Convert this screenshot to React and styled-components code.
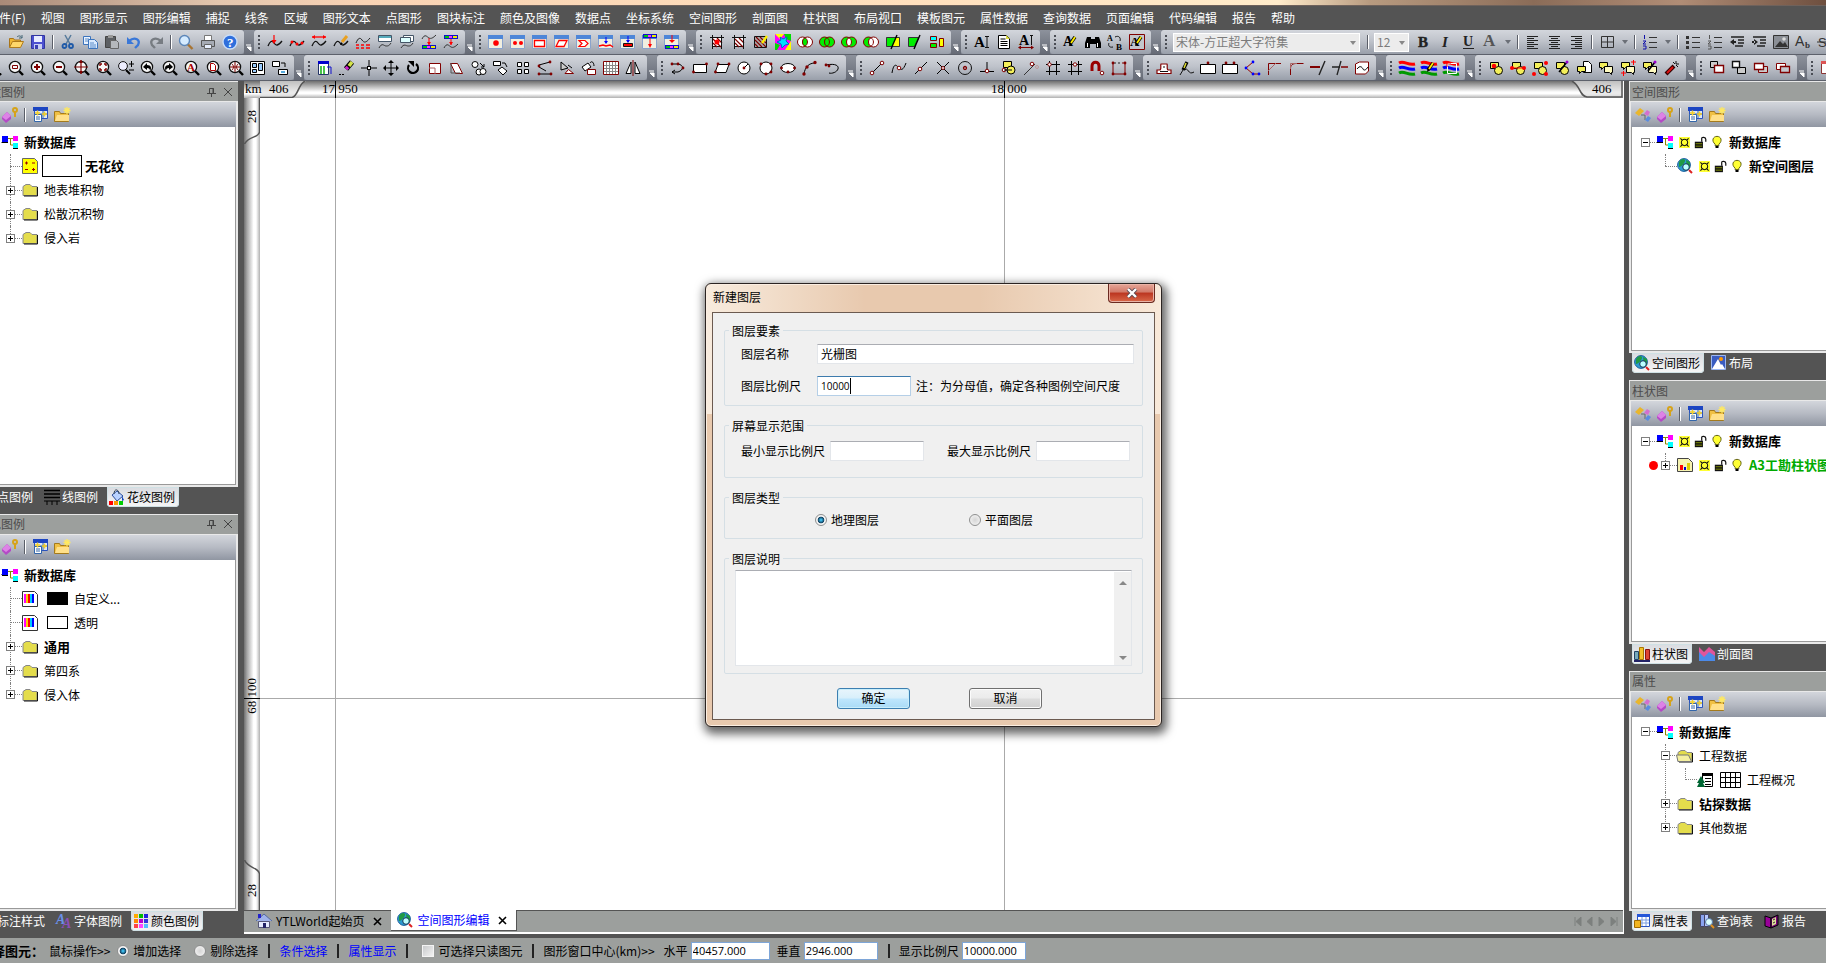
import React from 'react';
import styled, { createGlobalStyle } from 'styled-components';

const GlobalStyle = createGlobalStyle`
    * {
        box-sizing: border-box;
    }
    body {
        margin: 0;
        background: #fff;
        font-family: "Noto Sans CJK SC", "Noto Sans", sans-serif;
        font-size: 12px;
        line-height: 16px;
        color: #000;
    }
    button, input, select, textarea {
        font: inherit;
        color: inherit;
        margin: 0;
    }
    button {
        border: 0;
        background: none;
        padding: 0;
    }
`;

/* ---------- icon drawing helpers ---------- */

const box = (x, y, w, h) => `M${x} ${y}h${w}v${h}h${-w}z`;
const dot = (x, y, r) => `M${x - r} ${y}a${r} ${r} 0 1 0 ${2 * r} 0a${r} ${r} 0 1 0 ${-2 * r} 0z`;
const F = (d, fill = '#000') => <path d={d} fill={fill} />;
const S = (d, stroke = '#000', w = 1) => <path d={d} fill="none" stroke={stroke} strokeWidth={w} />;
const B = (d, fill, stroke = '#000', w = 1) => <path d={d} fill={fill} stroke={stroke} strokeWidth={w} />;
const T = (text, x, y, size, fill = '#000', extra = {}) => (
    <text x={x} y={y} fontSize={size} fill={fill} fontFamily="Liberation Serif, serif" fontWeight="bold" {...extra}>{text}</text>
);

const RED = '#f00';
const DARK = '#800000';
const CREAM = '#f4ef5a';

const lens = (...inner) => [
    S('M11 11l4 4', '#000', 2.4),
    B(dot(7, 7, 5.6), '#f6f6f6', '#111', 1.3),
    ...inner,
];
const wave = [S('M1 12c2-5 4-6 6-3s4 3 8-2', '#111', 1.3)];
const win = [B(box(0.5, 1.5, 14, 13), '#f1efe0', '#8aa3cc'), F(box(0, 1, 15, 4), '#4d86d8')];
const strip = (y) => [F(box(1, y, 14, 4), '#11c'), F(box(2, y + 1, 4, 2), '#0c0'), F(box(6, y + 1, 3, 2), '#f3f'), F(box(10, y + 1, 4, 2), '#ee0')];
const hatch = [B(box(3.5, 3.5, 9, 9), '#fff', '#111'), S('M4 9l4 4M4 5l8 8M8 4l5 5', DARK, 1.2)];
const twoRings = (l, m, r) => [
    B(dot(5.5, 8, 5), l, DARK),
    B(dot(10.5, 8, 5), r, DARK),
    B('M8 3.7a5 5 0 0 1 0 8.6a5 5 0 0 1 0-8.6z', m, DARK),
];
const pts = (list, color = DARK, r = 1.4) => list.map(([x, y]) => F(dot(x, y, r), color));
const shapes = [B(box(2.5, 2.5, 8, 6), CREAM), B(dot(10.5, 10.5, 4), CREAM)];
const rainbow = [
    S('M0 3c5-3 9 3 16 1', '#f00', 3),
    S('M0 8c5-3 9 3 16 1', '#00f', 3),
    S('M0 13c5-3 9 3 16 1', '#090', 3),
];
const notes = [B('M1.5 2.5h8v5h-4l-2 2v-2h-2z', CREAM), B('M6.5 6.5h8v6h-1v2l-2-2h-5z', '#fffbc0')];
const pencil = [S('M7 10l5-7', '#000', 3.4), S('M8 9l4-6', '#fe0', 1.8), F('M6 12l.5-3 2 1.5z')];
const bulletText = [F(box(7, 3, 8, 1), '#333'), F(box(7, 8, 8, 1), '#333'), F(box(7, 13, 8, 1), '#333')];
const aLines = (a, b) => [2, 4, 6, 8, 10, 12, 14].map((y, i) => F(box(i % 2 ? a : 2, y, i % 2 ? b : 11, 1), '#222'));
const tabFolder = [B('M1 4.5l3-2h4l2 2h5v9H1z', '#e4dd4c', '#888'), S('M15.5 5v9H2', '#111', 1)];

const art = {
    newFile: [B('M3.5 1.5h6l3 3v10h-9z', '#fff', '#789')],
    open: [B('M1.5 13.5v-9h4l1 1.5h6v2', '#f0b632', '#a8741a'), B('M1.5 13.5l3-6h11l-3 6z', '#ffd76a', '#b07c1c'), S('M9 3c2-2 4-1 5 1m0-3v3h-3', '#467', 1)],
    save: [B(box(1.5, 1.5, 13, 13), '#4c50d0', '#3035a0'), F(box(4, 2, 8, 6), '#e8ecff'), F(box(4, 10, 8, 5), '#c9cff2'), F(box(5, 11, 3, 4), '#3a3fb0')],
    cut: [S('M5 1l5 9M11 1L6 10', '#567a9c', 1.5), S(dot(4.5, 12, 2), '#1f5aa8', 1.8), S(dot(11, 12, 2), '#1f5aa8', 1.8)],
    copy: [B('M1.5 2.5h7v8h-7z', '#eaf3ff', '#3c74bd'), B('M6.5 5.5h6l3 3v6h-9z', '#d8e9ff', '#3c74bd'), S('M3 5h4M3 7h3M8 9h4M8 11h6M8 13h6', '#5b8cc9')],
    paste: [B(box(1.5, 2.5, 10, 11), '#5c5f63', '#444'), F(box(4, 1, 5, 3), '#999'), B('M6.5 6.5h6l2 2v6h-8z', '#b5b8bc', '#666')],
    undo: [S('M3 7c6-5 12-1 9 4l-3 3', '#3a78d8', 2.4), F('M1 3v7h7z', '#3a78d8')],
    redo: [S('M13 7c-6-5-12-1-9 4l3 3', '#777c82', 2.4), F('M15 3v7H8z', '#777c82')],
    find: [S('M9.5 10l5 5', '#a87431', 2.4), B(dot(6.5, 6.5, 5), '#d5ebff', '#5c86b8', 1.4)],
    print: [B(box(4.5, 1.5, 7, 5), '#fff', '#777'), B('M1.5 6.5h13v6h-13z', '#a6abb4', '#555'), B(box(4.5, 10.5, 7, 4), '#e8f0ff', '#666')],
    help: [B(dot(8, 8, 7), '#2f6fdc', '#c9ddf8', 1.4), T('?', 5, 13, 13, '#fff')],

    wavePoint: [...wave, S('M7 1v6', RED, 1.2), F('M4.5 6h5L7 10z', RED)],
    waveNodes: [...wave, ...pts([[3, 8], [8, 10], [13, 9]], RED, 1.5)],
    waveSpan: [...wave, S('M1 3h14', RED, 1.3), F('M1 3l3-2v4zM15 3l-3-2v4z', RED)],
    waveEdit: [...wave, S('M9 8l5-6', '#e9a020', 3), F('M7 11l1-3 2 2z')],
    waveDash: [S('M1 9c2-5 4-6 6-3s4 3 8-2', '#222'), S('M1 11h3M6 11h3M11 11h4M1 14h3M6 14h3M11 14h4', RED, 1.4)],
    waveWin: [B(box(1.5, 1.5, 13, 6), '#fff', '#456'), F(box(2, 2, 12, 2), '#5ab'), S('M2 14c3-6 5-2 7-2s3 0 5-3', '#333')],
    waveWins: [B(box(4.5, 1.5, 10, 6), '#fff', '#456'), B(box(1.5, 3.5, 10, 5), '#dff', '#456'), S('M2 14c3-5 5-2 7-2s3 0 5-3', '#333')],
    waveDown: [S('M1 5c3-6 5-2 7-1s4 0 7-3', '#333'), S('M8 4v7', RED), F('M6 8h4l-2 3z', RED), ...strip(11)],
    waveUp: [...strip(1), S('M8 5v6', RED), F('M6 8h4l-2 3z', RED), S('M1 14c3-6 5-2 7-1s4 0 7-3', '#333')],

    winDot: [...win, F(dot(8, 9, 2.8), RED)],
    winDots: [...win, F(dot(5, 9, 2), RED), F(dot(11, 9, 2), RED)],
    winRect: [...win, B(box(2.5, 6.5, 10, 6), '#fff', RED, 1.3)],
    winSkew: [...win, B('M5 6.5h8l-3 6h-8z', '#fff', RED, 1.3)],
    winFlag: [...win, B('M3 6.500h6l3 3-3 3H3l3-3z', '#fff', RED, 1.2)],
    winWave: [...win, S('M8 3v6', '#00f'), F('M6 7h4l-2 3z', '#00f'), S('M1 12l4-1 3 1 4-1 3 2', RED, 1.5)],
    winDrop: [...win, S('M8 2v6', '#00f'), F('M6 6h4l-2 3z', '#00f'), B(box(3.5, 9.5, 9, 3), RED, '#111')],
    winStripUp: [...win, ...strip(0), S('M8 4v7', RED), F('M6 10h4l-2 4z', RED)],
    winStripDown: [...win, S('M8 1v7', RED), F('M5 6h6l-3 3z', RED), ...strip(11)],

    hatchDot: [...hatch, S('M1 3.5h14M3.5 1v14M12.5 1v14', '#111'), F(dot(8, 8, 2.5), RED)],
    hatch: [...hatch, S('M1 3.5h14M3.5 1v14M12.5 1v14', '#111')],
    hatchEdit: [B(box(1.5, 2.5, 12, 11), '#aaa', '#111'), S('M2 10l3 3M2 6l7 7M3 3l10 10M7 3l6 6', DARK, 1.2), S('M9 9l5-7', '#fe0', 2.4)],
    colorMap: [F(box(0, 0, 16, 16), '#f0f'), F('M0 0h9L5 5zM10 16l6-9v9z', '#ff0'), F('M9 0h7v7l-5-2zM0 9l5 2-3 5H0z', '#0d0'), B('M5 3l3 2 4-2-1 4 3 3-4 1-3 3-1-4-4-2 4-2z', '#0df', '#06c')],
    ringInter: twoRings('#fff', '#0e0', '#fff'),
    ringAll: twoRings('#0e0', '#0e0', '#0e0'),
    ringMid: twoRings('#0e0', '#fff', '#0e0'),
    ringLeft: twoRings('#0e0', '#fff', '#fff'),
    splitBoth: [B(box(1.5, 3.5, 13, 9), '#0e0', '#333'), F('M11 4h3v8H7z', '#ff0'), S('M12 1L6 15', '#000', 1.4)],
    splitOne: [B('M1.5 3.5h10l-4 9h-6z', '#0e0', '#333'), S('M13 1L7 15', '#000', 1.4)],
    blocks: [B(box(1.5, 2.5, 6, 4), '#0ff', DARK), B(box(1.5, 9.5, 6, 4), '#0e0', DARK), B(box(10.5, 4.5, 4, 8), '#ff0', DARK)],

    textA: [T('A', 0, 13, 15), S('M11 2.5h4M13 3v10M11 13.5h4', '#111')],
    page: [B('M2.5 1.5h8l3 3v10h-11z', '#fff'), S('M4.5 5h5M4.5 7.5h7M4.5 9.5h7M4.5 11.5h7'), F('M10 1l4 4h-4z', '#dd4')],
    textSpan: [T('A', 1, 11, 14), S('M12 1.5h3M13.5 2v9', '#111'), S('M1 13.5h14', DARK), F('M0 13.5l3-2v4zM16 13.5l-3-2v4z', DARK)],
    textEdit: [T('A', 0, 12, 14), ...pencil],
    binoculars: [F('M2 3h4v2h4V3h4l2 6v5h-5v-4H5v4H0V9z'), F(box(2, 9, 1, 4), '#fff'), F(box(12, 9, 1, 4), '#fff')],
    replace: [T('A', 0, 7, 8), T('B', 9, 16, 9), S('M8 3c4-2 6 1 5 4M6 13c-4 1-5-2-4-4', '#111')],
    textBox: [B(box(0.5, 0.5, 15, 15), '#c3c6cc', DARK), T('A', 1, 12, 13), ...pencil],

    lensRect: lens(S(box(4.5, 5.5, 5, 3), DARK)),
    lensPlus: lens(F(box(4, 6, 6, 2), DARK), F(box(6, 4, 2, 6), DARK)),
    lensMinus: lens(F(box(4, 6, 6, 2), DARK)),
    lensPan: lens(S('M0 7h14M7 0v14', DARK, 1.2), F('M5 3h4L7 0zM5 11h4l-2 3z', DARK)),
    lensFull: lens(S('M4 6V4h2M8 4h2v2M10 8v2H8M6 10H4V8', DARK, 1.4)),
    lensStep: [S('M8 10l4 4', '#000', 2), B(dot(5, 6, 4.4), '#eef', '#111'), S('M11 4h5M13.5 1v6M11 10h5')],
    lensBack: lens(F('M3 7l4-4v2c4 0 5 3 3 6 0-2-1-3-3-3v2z')),
    lensNext: lens(F('M11 7L7 3v2c-4 0-5 3-3 6 0-2 1-3 3-3v2z')),
    lensA: lens(T('A', 3, 11, 11, '#a00')),
    lensPage: lens(B('M4.5 3.5h3l2 2v5h-5z', '#fff', '#a00')),
    lensGlobe: lens(S('M2 7h10M7 2v10M4 4c2 2 2 4 0 6M10 4c-2 2-2 4 0 6', DARK)),
    tiles: [B(box(0.5, 1.5, 14, 13), '#fff'), B(box(2.5, 3.5, 4, 4), '#9cf'), B(box(2.5, 9.5, 4, 3), '#9cf'), B(box(8.5, 3.5, 4, 7), '#9cf')],
    tilesMove: [B(box(0.5, 1.5, 7, 5), '#fff'), B(box(6.5, 9.5, 9, 5), '#fff'), S('M9 3h4v4'), F(box(9, 11, 4, 2), '#5ad')],

    tableMove: [B(box(1.5, 1.5, 10, 13), '#fff', '#236'), F(box(1, 1, 11, 3), '#00c'), S('M4 6v8M7 6v8', '#0a0', 1.4), S('M10 7h4v7', '#11c')],
    eraser: [S('M7 9l6-7', '#000', 5.4), S('M10 6l3-4', '#d4e34a', 3.6), S('M7 9l2-2', '#c2c', 3.6), F('M0 14h2v1H0zM3 14h2v1H3z')],
    cross: [S('M8 0v16M0 8h16'), F(box(6, 6, 4, 4)), F(box(7, 7, 2, 2), '#fff')],
    move: [S('M8 2v12M2 8h12'), F('M8 0l3 3H5zM8 16l3-3H5zM0 8l3-3v6zM16 8l-3-3v6z')],
    rotate: [S('M4 5a5 5 0 1 0 7-1', '#000', 2.2), F('M3 1h6v6z')],
    scale: [B(box(2.5, 3.5, 11, 10), '#fff', DARK), S('M2 8h6v6', '#a66')],
    skew: [B('M1.5 3.5h7l5 10h-7z', '#fff', DARK), S('M2 3v10h9', '#555')],
    flipTri: [B('M8 3l6 11H2z', '#fff', DARK)],
    copyRing: [B(dot(4, 4.5, 3), '#fff'), B(dot(8, 12, 3), '#fff'), B(dot(12, 11.5, 3), '#fff'), S('M9 3l4 4m0-3v3h-3')],
    copyBox: [B(box(0.5, 1.5, 7, 4), '#fff'), B('M5 10l4-3 5 4-4 4z', '#fff'), S('M9 3h3l2 4')],
    array: [B(box(2.5, 2.5, 4, 4), '#fff'), B(box(9.5, 2.5, 4, 4), '#fff'), B(box(2.5, 9.5, 4, 4), '#fff'), B(box(9.5, 9.5, 4, 4), '#fff')],
    alignLine: [S('M2 5l11-3M2 7l7 4M2 14h12'), ...pts([[2, 6], [13, 2], [2, 14], [14, 14]])],
    mirrorTri: [B('M2 2l7 6-7 2z', '#ccc'), B('M6 13.5l3.5-4 5 4z', '#fff', DARK), S('M9 5l4 3')],
    rotBox: [B('M1 7l6-4 3 4-6 4z', '#fff'), B(box(6.5, 9.5, 8, 5), '#fff', DARK), S('M9 3c2-3 4 0 4 3')],
    mesh: [B(box(0.5, 1.5, 15, 13), '#fff', DARK), S('M3.5 2v12M6.5 2v12M9.5 2v12M12.5 2v12M1 5.5h14M1 8.5h14M1 11.5h14', '#888')],
    mirror: [B('M6 2v11.5H1z', '#fff'), B('M10 2v11.5h5z', '#fff'), S('M8 0v16', DARK)],

    polyArrow: [S('M2 4h6c6 1 6 6 0 8H2M5 10l-3 2 3 2'), ...pts([[2, 4], [8, 4], [13, 8]])],
    rect: [B(box(1.5, 4.5, 13, 8), '#fff'), ...pts([[1.5, 12], [14.5, 4]])],
    para: [B('M4 4.5h11l-3 8H1z', '#fff'), ...pts([[4, 4], [15, 4], [1.5, 12]])],
    circleR: [B(dot(8, 8, 6), '#fff'), S('M8 8l4-4'), ...pts([[8, 8]])],
    circle3: [B(dot(8, 8, 6), '#fff'), ...pts([[3, 4], [13, 4], [8, 14], [13, 12]])],
    ellipse: [B('M1 8a7 4.5 0 1 0 14 0a7 4.5 0 1 0-14 0z', '#fff'), ...pts([[1.5, 8], [8, 12], [14.5, 8]])],
    arc: [S('M2 14C3 7 7 3 13 3'), ...pts([[2, 14], [5, 7], [13, 2.5]], DARK, 1.7)],
    arcEnd: [S('M2 5c10-2 13 1 12 4s-6 5-9 4'), ...pts([[2, 5], [5, 6]])],

    snapLine: [S('M3 13l9-9'), B(dot(3, 13, 1.8), '#fff', DARK), B(dot(13, 3, 1.8), '#fff', DARK)],
    snapCurve: [S('M1 13C3 1 6 6 8 8s4 3 7-5'), B(dot(8, 8, 1.8), '#fff', DARK)],
    snapMid: [S('M2 14L14 2'), B(dot(7, 9, 1.8), '#fff', DARK)],
    snapX: [S('M2 2l12 12M14 2L2 14'), B(dot(8, 8, 1.5), '#fff', DARK)],
    snapCenter: [S(dot(8, 8, 6.5), '#111'), S(dot(8, 8, 1.5), DARK, 1.3)],
    snapFoot: [S('M8 2v9M1 11.5h14'), B(dot(8, 11, 1.8), '#fff', DARK)],
    snapShape: [B(box(2.5, 1.5, 8, 6), CREAM), B(dot(10, 10, 4), CREAM), B(dot(3, 10, 1.8), '#fff', DARK), S('M3 10h8')],
    snapTan: [S('M1 15L12 4', '#333'), B(dot(9, 4, 1.8), '#fff', DARK), S(dot(14, 7, 1.5), '#b99')],
    gridSnap: [S('M4.5 1v14M11.5 1v14M1 4.5h14M1 11.5h14'), B(dot(4.5, 4.5, 1.7), '#fff', DARK)],
    gridMid: [S('M4.5 1v14M11.5 1v14M1 4.5h14M1 11.5h14'), B(dot(8, 4.5, 1.7), '#fff', DARK)],
    magnet: [S('M3 11V6c0-5 7-5 7 0v5', '#900', 3), B(dot(13, 13, 1.8), '#fff', DARK)],
    polySnap: [B('M2 3h12v11H2z', 'none', DARK), S('M2 3h9', '#c3c6cc', 2), S('M3 3h2M7 3h2', '#222'), ...pts([[2, 3], [14, 3], [14, 14], [2, 14]])],

    stamp: [B('M1 13.5V10h3c2-2 0-4 1-6h6c1 2-1 4 1 6h3v3.5z', '#fff', DARK, 1.2), S('M4 11.5h8M7 7h2', '#111')],
    penCurve: [S('M5 10l4-8', '#000', 3.4), S('M6 8l2-5', '#dd3', 1.5), S('M2 15l3-5M7 10c3-4 3 6 9 2', '#111')],
    boxOne: [B(box(0.5, 4.5, 15, 9), '#fff'), ...pts([[8, 3]])],
    boxTwo: [B(box(0.5, 4.5, 15, 9), '#fff'), ...pts([[4, 3], [12, 3]])],
    blueArc: [S('M9 2L2 8l7 6h6', '#900'), ...pts([[9, 2], [2, 8], [9, 14], [15, 14]], '#00f')],
    corner: [S('M2.5 15V3.5H15', DARK), S('M2 11l8-8', '#a66')],
    corner2: [S('M2.5 15V9c0-4 2-5.5 6-5.5h7', DARK), S('M2.5 9V3.5H9', '#a66')],
    extend: [S('M0 7h10', DARK, 2), S('M15 1L9 15', '#222', 1.4)],
    trim: [S('M0 7h8', '#222', 1.5), S('M9 7h7', DARK, 1.5), S('M9 1L5 15', '#222', 1.3)],
    region: [B('M1.5 4l4-2h9v9l-3 3h-10z', '#fff', DARK), S('M3 9c3-4 5-2 6 0s3 1 5-2')],
    rainbow: rainbow,
    rainbowEdit: [...rainbow, ...pencil],
    rainbowBox: [...rainbow, S(box(4.5, 3.5, 9, 10), '#fff'), S('M4 3l4 0M4 3v4', RED)],

    shapeDot: [...shapes, F(dot(6, 6, 2.3), RED)],
    shapeDots: [...shapes, S('M1 8h14', RED), ...pts([[2, 8], [14, 8]], RED, 2)],
    shapeCorners: [...shapes, ...pts([[2, 14], [14, 3], [14, 14]], RED, 2)],
    shapeEdit: [...shapes, S('M5 12l8-10', '#000', 1.5), F(dot(13, 2, 1.5), '#90c')],
    notePage: [B('M7.5 1.5h5l3 3v8h-8z', '#fff'), B('M1.5 6.5h8v5h-4l-2 2v-2h-2z', CREAM)],
    notes: notes,
    notesPlus: [...notes, S('M1 13h5M3.5 11v5M11 2h5M13.5 0v5', RED)],
    notesEdit: [...notes, S('M6 11l7-9', '#000', 1.7), F(dot(13, 2, 1.5), '#90c')],
    wand: [S('M2 14l8-8', '#300', 4), S('M3 13l6-6', '#d11', 2), S('M12 1v3M15 4h-3M14 7l-2-2M9 2l2 2', '#111')],
    front: [B(box(1.5, 1.5, 7, 6), '#ccc'), B(box(5.5, 5.5, 9, 7), '#fff', DARK, 1.4)],
    back: [B(box(6.5, 7.5, 8, 6), '#ccc'), B(box(1.5, 1.5, 7, 6), '#fff', '#111', 1.4)],
    raise: [B(box(5.5, 6.5, 9, 6), '#ccc', DARK), B(box(1.5, 3.5, 9, 6), '#fff', DARK, 1.3)],
    lower: [B(box(1.5, 3.5, 9, 6), '#fff', DARK), B(box(5.5, 6.5, 9, 6), '#c5c8ce', DARK, 1.3)],
    table: [B(box(1.5, 1.5, 14, 12), '#fff', '#833'), F(box(1, 1, 14, 3), '#d55'), S('M6.5 2v11', '#a66')],

    bold: [T('B', 2, 13, 15, '#222', { stroke: '#222', strokeWidth: 0.4 })],
    italic: [T('I', 4, 13, 15, '#222', { fontStyle: 'italic' })],
    underline: [T('U', 3, 12, 14, '#222'), F(box(3, 14, 11, 1), '#222')],
    fontColor: [T('A', 1, 12, 17, '#555')],
    left: aLines(2, 7),
    center: aLines(4, 7),
    right: aLines(6, 7),
    borders: [S(box(2.5, 2.5, 12, 11), '#333'), S('M8.5 2v12M2 8h13', '#333')],
    numbered: [...bulletText, F(box(2, 1, 1, 4), '#11a'), S('M1 7h3l-3 3h3M1 12h3v3H1', '#11a')],
    bullets: [...bulletText, F(box(1, 2, 3, 3), '#333'), F(box(1, 7, 3, 3), '#333'), F(box(1, 12, 3, 3), '#333')],
    numbers: [...bulletText, F(box(2, 1, 1, 4), '#555'), S('M1 7h3l-3 3h3M1 12h3v3H1', '#555')],
    outdent: [S('M2 3h13M9 6h6M9 9h6M6 12h8', '#222', 1.3), F('M1 8l4-3v6zM4 7h3v2H4z', '#222')],
    indent: [S('M2 3h13M9 6h6M9 9h6M6 12h8', '#222', 1.3), F('M7 8L3 5v6zM1 7h3v2H1z', '#222')],
    picture: [B(box(0.5, 1.5, 15, 13), '#8b8f96', '#333'), F('M2 13l5-6 3 3 2-2 3 5z', '#333'), F(dot(11, 5, 1.8), '#ddd')],
    smallB: [T('A', 0, 12, 14, '#333', { fontFamily: 'Liberation Sans', fontWeight: 'normal' }), T('b', 10, 14, 9, '#333')],
    strike: [T('S', 1, 13, 13, '#333', { fontFamily: 'Liberation Sans', fontWeight: 'normal' }), S('M0 8h14', '#333')],

    db: [F(box(0, 2, 6, 6), '#00f'), S('M6 4.5h5M8.5 4v7h3', '#880'), F(box(11, 2, 5, 5), '#f0f'), F(box(11, 9, 5, 5), '#0ff'), S('M0 8.5h6M11 14.5h5')],
    sun: [F(box(0, 0, 16, 16), '#ff3'), S(dot(8, 8, 4.6), '#111', 1.5), S('M2 2l3 3M14 2l-3 3M2 14l3-3M14 14l-3-3', '#111', 1.5)],
    lock: [F(box(1, 7, 10, 8), '#111'), S('M2 9.5h8M2 12.5h8', '#9a0'), S('M9.5 7V3c0-2 5-2 5 1v3', '#111', 1.5)],
    bulb: [B('M5.5 11C0 6 3 .5 8 .5s8 5.5 2.500 10.500v2h-5z', '#ff3', '#550', 1.2), F(box(6, 13, 4, 3))],
    globe: [B(dot(7, 7, 6.4), '#2a9ad0', '#1d5f9c'), F('M2 4c3-4 5-3 6-2S5 9 2 9zM9 2l4 2v6l-3 1z', '#1f9a45'), B(dot(9, 9, 3.3), '#bff', '#135'), S('M12 12l3 3', '#d22', 2)],
    pattern: [B('M.5.5h12l3 3v12H.5z', '#ff0', '#666'), S('M3 5h3M4.5 3.5v3M10 5h3M3 11.5h3M10 11.5h3M11.5 10v3', '#900')],
    palette: [B('M.5.5h12l3 3v12H.5z', '#fff', '#333'), F(box(2, 3, 2, 9), '#f0f'), F(box(4, 3, 2, 9), '#fc0'), F(box(6, 3, 2, 9), RED), F(box(8, 3, 2, 9), '#0cf'), F(box(10, 3, 2, 9), '#00f')],
    folder: tabFolder,
    folderOpen: [...tabFolder, B('M1 13.5L-.5 7h12l3 6.5z', '#f5f0a0', '#777')],
    report: [B('M.5 1.5h11l4 4v9H.5z', '#f6f3b0', '#444'), F(box(3, 8, 3, 5), RED), F(box(7, 10, 2, 3), '#00c'), F(box(10, 6, 3, 7), '#dc0')],
    form: [B(box(5.5, 1.5, 10, 13), '#fff'), F(box(5, 1, 11, 3)), S('M8 6.5h6M8 9.5h6M8 12.5h6'), F('M4 4l4 7H6l2 4H0l2-4H0z', '#063')],

    link: [F('M0 6l5-5 4 3-5 5z', '#e9b62c'), S('M6 8h4v5', '#666'), F('M9 7l3-4 3 2-2 4z', '#d56fd0'), F('M10 13l3-4 3 2-3 4z', '#5a8ce0')],
    gem: [F('M0 10l5-5 4 4v3l-5 4-4-4z', '#b44ac6'), F('M0 10l5-5 4 4-5 4z', '#dd82e6'), S(dot(13, 3, 2), '#d6a319', 2), F(box(12, 5, 2, 5), '#d6a319')],
    addTable: [B(box(2.5, 1.5, 13, 10), '#dde8fa', '#2a52be'), F(box(1, 0, 15, 4), '#1c45c2'), B(box(2.5, 7.5, 7, 7), '#fff', '#36a'), S('M4 10h4M4 12h4M8 7h7M11 4v7', '#36a'), S('M3 6h5M5.5 3.5v5M10 7h5M12.5 4.5v5', '#f4cf27', 1.5)],
    addFolder: [B('M.5 14.5v-10h5l1 2h8v8z', '#f0c044', '#a47a1c'), F('M1 14l2-6h12v6z', '#ffe08a'), S('M13 0v7M9.5 3.5h7M10.5 1l5 5M15.5 1l-5 5', '#ffe960', 1.3)],

    lineTab: [S('M0 1.5h16M0 5h16M0 8.5h16', '#000', 1.6), S('M0 12h16M3 12v4M8 12v4M13 12v4', '#000')],
    pointTab: [F(dot(8, 8, 5), '#aaa')],
    bucket: [B('M3 6l5-4 6 5-6 5z', '#b9d2ff', '#2d4f9c'), S('M5 5c0-6 5-5 5 0', '#345'), F('M13 7l2 4-2 1z', '#14b'), F(box(0, 12, 4, 4), RED), F(box(5, 12, 4, 4), '#f90'), F(box(10, 12, 4, 4), '#0c0')],
    fontTab: [T('A', 0, 11, 14, '#6a90e8', { fontStyle: 'italic' }), T('A', 6, 15, 14, '#8a4fb8', { fontStyle: 'italic' })],
    swatches: ['#fa0', '#0b0', '#22d', '#f80', '#b0c', '#33d', '#f44', '#f4f', '#5bf'].map((c, i) => F(box((i % 3) * 5 + 1, Math.floor(i / 3) * 5 + 1, 4, 4), c)),
    layout: [B(box(0.5, 0.5, 14, 14), '#3a5cc0', '#9db7f0'), F('M1 14l6-10 3 6 1-1 3 5z', '#fff'), F(dot(10, 4, 2), '#f90')],
    bars: [B(box(0.5, 5.5, 4, 8), '#7ab', '#246'), B(box(5.5, 1.5, 4, 12), '#f2c02a', '#a70'), B(box(11.5, 3.5, 4, 10), '#d43', '#811'), S('M0 15h16', '#226', 2)],
    section: [F('M0 3l5 5 4-4 7 5v6H0z', '#4b8ae8'), F('M0 1l5 5 5-5 6 5v4l-6-4-5 5-5-5z', '#e0559b')],
    sheet: [B(box(3.5, 1.5, 12, 12), '#fff', '#2a52be'), F(box(3, 1, 13, 3), '#2456d8'), S('M4 7h11M4 10h11M8 4v9M12 4v9', '#7a9be0'), B('M0.5 7.5h6v7h-6z', '#f2b41f', '#a06b00')],
    query: [B(box(1.5, 1.5, 4, 12), '#8aa3f0', '#446'), B(box(5.5, 1.5, 4, 12), '#b8c7ff', '#446'), B(dot(10, 9, 3.5), '#dff', '#57a'), S('M12 12l3 3', '#e09020', 2)],
    book: [B('M1 3l6 2v10l-6-2z', '#909', '#000'), B('M7 5l7-3v10l-7 3z', '#707', '#000'), F('M8 6l4-2v7l-4 2z', '#dd9'), S('M9 7l2-1M9 10l2-1', '#333')],
    home: [B('M2.5 8.5h11v6h-11z', '#e6ebff', '#557'), F('M0 8l8-7 8 7z', '#9fb2ea'), S('M0 8l8-7 8 7', '#556a9c'), F(box(7, 10, 3, 5), '#226'), F(box(2, 1, 3, 4), '#22c')],
};

const IconSvg = styled.svg`
    display: block;
    flex: none;
    width: ${(p) => p.$size}px;
    height: ${(p) => p.$size}px;
    overflow: visible;
`;

const Icon = ({ name, size = 16 }) => (
    <IconSvg viewBox="0 0 16 16" $size={size} aria-hidden="true">
        {React.Children.toArray(art[name])}
    </IconSvg>
);

/* ---------- frame ---------- */

const Page = styled.div`
    display: flex;
    flex-direction: column;
    min-height: 100vh;
    padding-bottom: 14px;
    overflow: hidden;
    white-space: nowrap;
`;

const TitleStrip = styled.div`
    height: 6px;
    border-bottom: 1px solid #6f625c;
    background: linear-gradient(90deg, #a98a78, #e3c6ae 12%, #f9d3b4 20%, #ffe0bd 50%, #ffeccb 70%, #b89b80 75%, #8b6c58 84%, #b08d76 92%, #6e4f3f);
`;

const MenuBar = styled.nav`
    display: flex;
    align-items: center;
    gap: 15px;
    height: 24px;
    margin-left: -13px;
    padding-bottom: 1px;
    background: #545454;
    color: #fff;
    button {
        flex: none;
    }
`;

const ToolbarRow = styled.div`
    display: flex;
    height: ${(p) => p.$height}px;
    background: #7a7f8a;
    border-bottom: 1px solid #5d616b;
    overflow: hidden;
`;

const Toolbar = styled.div`
    display: flex;
    align-items: center;
    flex: none;
    padding-right: 3px;
    background: linear-gradient(#d3d6dc, #bfc3cb 45%, #999faa);
    border-radius: 3px;
    &:first-child {
        margin-left: -27px;
    }
`;

const Grip = styled.span`
    width: 10px;
    height: 14px;
    padding-left: 4px;
    &::before {
        content: '';
        display: block;
        width: 2px;
        height: 14px;
        background: repeating-linear-gradient(#4a4d55 0 2px, transparent 2px 4px);
    }
`;

const ToolButton = styled.button`
    display: flex;
    align-items: center;
    justify-content: center;
    width: 22px;
    height: 24px;
`;

const Divider = styled.span`
    width: 8px;
    height: 14px;
    padding-left: 3px;
    &::before {
        content: '';
        display: block;
        width: 2px;
        height: 14px;
        background: linear-gradient(90deg, #5a5e68 50%, #fff 50%);
    }
`;

const Overflow = styled.button`
    display: flex;
    align-items: flex-end;
    justify-content: center;
    flex: none;
    width: 10px;
    padding-bottom: 2px;
    background: linear-gradient(#8d929c, #666b76);
`;

const DropArrow = styled.button`
    display: flex;
    align-items: center;
    justify-content: center;
    width: 13px;
    height: 24px;
    &::before {
        content: '';
        border: 3px solid transparent;
        border-top: 4px solid #6b6f77;
        border-bottom: 0;
    }
`;

const SelectBox = styled.label`
    display: flex;
    position: relative;
    width: ${(p) => p.$width}px;
    margin: 0 ${(p) => p.$gap}px 0 2px;
    &::after {
        content: '';
        position: absolute;
        right: 4px;
        top: 8px;
        border: 3px solid transparent;
        border-top: 4px solid #888;
        border-bottom: 0;
    }
    select {
        appearance: none;
        width: 100%;
        height: 19px;
        padding: 0 2px;
        border: 1px solid #fff;
        border-radius: 0;
        background: #ececec;
        color: #7b7b7b;
        opacity: 1;
        line-height: 16px;
    }
`;

const menus = ['文件(F)', '视图', '图形显示', '图形编辑', '捕捉', '线条', '区域', '图形文本', '点图形', '图块标注', '颜色及图像', '数据点', '坐标系统', '空间图形', '剖面图', '柱状图', '布局视口', '模板图元', '属性数据', '查询数据', '页面编辑', '代码编辑', '报告', '帮助'];

const topBars = [
    'newFile open save | cut copy paste undo redo | find print help',
    'wavePoint waveNodes waveSpan waveEdit waveDash waveWin waveWins waveDown waveUp',
    'winDot winDots winRect winSkew winFlag winWave winDrop winStripUp winStripDown',
    'hatchDot hatch hatchEdit colorMap ringInter ringAll ringMid ringLeft splitBoth splitOne blocks',
    'textA page textSpan',
    'textEdit binoculars replace textBox',
];

const formatBar = 'bold italic underline fontColor > | left center right | borders > | numbered > | bullets numbers outdent indent picture smallB strike';

const lowerBars = [
    'lensRect lensRect lensPlus lensMinus lensPan lensFull lensStep lensBack lensNext lensA lensPage lensGlobe tiles tilesMove',
    'tableMove eraser cross move rotate scale skew flipTri copyRing copyBox array alignLine mirrorTri rotBox mesh',
    'polyArrow rect para circleR circle3 ellipse arc arcEnd',
    'snapLine snapCurve snapMid snapX snapCenter snapFoot snapShape snapTan gridSnap gridMid magnet polySnap',
    'stamp penCurve boxOne boxTwo blueArc corner corner2 extend trim region',
    'rainbow rainbowEdit rainbowBox',
    'shapeDot shapeDots shapeCorners shapeEdit notePage notes notesPlus notesEdit wand',
    'front back raise lower',
    'table',
];
lowerBars[1] = 'tableMove eraser cross move rotate scale skew copyRing copyBox array alignLine mirrorTri rotBox mesh mirror';

const Tools = ({ items }) => items.split(' ').map((item, i) => {
    if (item === '|') return <Divider key={i} />;
    if (item === '>') return <DropArrow key={i} aria-label="更多" />;
    return <ToolButton key={i} aria-label={item}><Icon name={item} /></ToolButton>;
});

const ToolbarWithEnd = ({ items }) => (
    <>
        <Toolbar>
            <Grip />
            <Tools items={items} />
        </Toolbar>
        <Overflow aria-label="工具栏选项">
            <svg width="6" height="8" viewBox="0 0 6 8"><path d="M0 1h5M1 3h4v4z" stroke="#fff" fill="#fff" strokeWidth="1" /></svg>
        </Overflow>
    </>
);

/* ---------- docked panels ---------- */

const Workspace = styled.main`
    display: flex;
    flex: 1;
    background: #545454;
`;

const Dock = styled.aside`
    display: flex;
    flex-direction: column;
    flex: none;
    width: ${(p) => (p.$side === 'left' ? 264 : 224)}px;
    margin-left: ${(p) => (p.$side === 'left' ? -26 : 5)}px;
    margin-right: ${(p) => (p.$side === 'left' ? 6 : -27)}px;
`;

const Panel = styled.section`
    display: flex;
    flex-direction: column;
    flex: ${(p) => p.$share} 1 0;
`;

const Caption = styled.header`
    display: flex;
    align-items: center;
    height: 20px;
    padding: 0 2px;
    border-top: 1px solid #e8e8e8;
    border-left: 1px solid #e8e8e8;
    background: #9c9f9d;
    color: #4c4c4c;
    h2 {
        flex: 1;
        margin: 0;
        font-size: 12px;
        font-weight: normal;
    }
    button {
        width: 16px;
        height: 16px;
    }
`;

const PanelBody = styled.div`
    display: flex;
    flex-direction: column;
    flex: 1;
    padding: 1px 2px 2px;
    background: #e9e9e9;
`;

const PanelTools = styled.div`
    display: flex;
    align-items: center;
    height: 25px;
    padding-left: 1px;
    background: linear-gradient(#d3d6dc, #b6bac3 50%, #9096a2);
`;

const Tree = styled.ul`
    flex: 1;
    margin: 0;
    padding: 3px 0 0 9px;
    list-style: none;
    background: #fff;
    border: 1px solid #999;
    border-top: 0;
`;

const Node = styled.li`
    position: relative;
    ul {
        margin: 0;
        padding: 0 0 0 20px;
        list-style: none;
    }
    &::before {
        content: '';
        position: absolute;
        left: 4px;
        top: 0;
        height: ${(p) => (p.$last ? '12px' : '100%')};
        border-left: ${(p) => (p.$root ? 0 : 1)}px dotted #808080;
    }
`;

const NodeRow = styled.div`
    display: flex;
    align-items: center;
    height: 24px;
    font-size: ${(p) => (p.$bold ? 13 : 12)}px;
    font-weight: ${(p) => (p.$bold ? 'bold' : 'normal')};
    color: ${(p) => p.$color || '#000'};
`;

const Branch = styled.span`
    display: flex;
    align-items: center;
    position: relative;
    width: 16px;
    height: 9px;
    &::before {
        content: '';
        flex: none;
        width: ${(p) => (p.$leaf ? 4 : 9)}px;
    }
    &::after {
        content: '';
        flex: 1;
        border-top: 1px dotted #808080;
    }
`;

const Expander = styled.button`
    position: absolute;
    left: 0;
    top: 0;
    width: 9px;
    height: 9px;
    border: 1px solid #808080;
    background:
        linear-gradient(#000, #000) center / 5px 1px no-repeat,
        ${(p) => (p.$open ? '' : 'linear-gradient(#000, #000) center / 1px 5px no-repeat,')}
        #fff;
`;

const StateIcons = styled.span`
    display: flex;
    gap: 4px;
    padding-left: 6px;
    align-items: center;
`;

const Swatch = styled.span`
    width: ${(p) => p.$w}px;
    height: ${(p) => p.$h}px;
    margin: 0 ${(p) => p.$right}px 0 ${(p) => p.$left}px;
    border: 1px solid #000;
    background: ${(p) => p.$fill};
`;

const NodeText = styled.span`
    padding-left: 6px;
`;

const RecordDot = styled.span`
    position: absolute;
    left: -12px;
    top: 8px;
    width: 9px;
    height: 9px;
    border-radius: 5px;
    background: #f00;
`;

const PanelTabs = styled.div`
    display: flex;
    align-items: flex-start;
    gap: 5px;
    height: 27px;
    padding-left: 3px;
`;

const PanelTab = styled.button`
    display: flex;
    align-items: center;
    gap: 2px;
    height: 20px;
    padding: 0 4px 0 2px;
    border-radius: 0 0 4px 4px;
    background: ${(p) => (p.$active ? 'linear-gradient(#d9dbe0, #f6f6f6)' : 'none')};
    box-shadow: ${(p) => (p.$active ? 'inset 0 0 0 1px #cfe0e4' : 'none')};
    color: ${(p) => (p.$active ? '#000' : '#fff')};
`;

const TreeNode = ({ node, root, last }) => (
    <Node $root={root} $last={last}>
        {node.dot && <RecordDot />}
        <NodeRow $bold={node.bold} $color={node.color}>
            <Branch $leaf={!node.fold}>
                {node.fold && <Expander $open={node.fold === 'open'} aria-label={node.text} />}
            </Branch>
            <Icon name={node.icon} />
            {node.state && (
                <StateIcons>
                    <Icon name="sun" size={11} />
                    <Icon name="lock" size={13} />
                    <Icon name="bulb" size={12} />
                </StateIcons>
            )}
            {node.swatch && <Swatch {...node.swatch} />}
            {node.mesh && (
                <svg width="28" height="16" viewBox="0 0 28 16">
                    <path d="M7.5.5h20v15h-20zM12.5 0v15M17.5 0v15M22.5 0v15M7 5.5h20M7 10.5h20" fill="none" stroke="#000" />
                </svg>
            )}
            <NodeText>{node.text}</NodeText>
        </NodeRow>
        {node.children && (
            <ul>
                {node.children.map((child, i) => (
                    <TreeNode key={child.text} node={child} last={i === node.children.length - 1} />
                ))}
            </ul>
        )}
    </Node>
);

const DockPanel = ({ title, share, controls, tree, tabs }) => (
    <Panel $share={share}>
        <Caption>
            <h2>{title}</h2>
            {controls && (
                <>
                    <button aria-label="自动隐藏"><svg width="10" height="10" viewBox="0 0 10 10"><path d="M2.5 6V1.5h4V6M6 1v5M0 6.5h9M4.5 7v3" fill="none" stroke="#444" /></svg></button>
                    <button aria-label="关闭"><svg width="10" height="10" viewBox="0 0 10 10"><path d="M1 1l8 8M9 1L1 9" fill="none" stroke="#444" /></svg></button>
                </>
            )}
        </Caption>
        <PanelBody>
            <PanelTools><Tools items="link gem | addTable addFolder" /></PanelTools>
            <Tree><TreeNode node={tree} root last /></Tree>
        </PanelBody>
        <PanelTabs>
            {tabs.map(([icon, text, active]) => (
                <PanelTab key={text} $active={active}><Icon name={icon} />{text}</PanelTab>
            ))}
        </PanelTabs>
    </Panel>
);

const folder = (text, bold) => ({ icon: 'folder', text, bold, fold: 'closed' });
const database = (children, state) => ({ icon: 'db', text: '新数据库', bold: true, fold: 'open', state, children });

const leftPanels = [
    {
        title: '花纹图例',
        share: 432,
        tree: database([
            { icon: 'pattern', text: '无花纹', bold: true, swatch: { $w: 40, $h: 22, $left: 4, $right: -3, $fill: '#fff' } },
            folder('地表堆积物'),
            folder('松散沉积物'),
            folder('侵入岩'),
        ]),
        tabs: [['pointTab', '点图例'], ['lineTab', '线图例'], ['bucket', '花纹图例', true]],
    },
    {
        title: '颜色图例',
        share: 424,
        tree: database([
            { icon: 'palette', text: '自定义...', swatch: { $w: 21, $h: 13, $left: 9, $right: 0, $fill: '#000' } },
            { icon: 'palette', text: '透明', swatch: { $w: 21, $h: 13, $left: 9, $right: 0, $fill: '#fff' } },
            folder('通用', true),
            folder('第四系'),
            folder('侵入体'),
        ]),
        tabs: [['pointTab', '标注样式'], ['fontTab', '字体图例'], ['swatches', '颜色图例', true]],
    },
];

const rightPanels = [
    {
        title: '空间图形',
        share: 299,
        tree: database([{ icon: 'globe', text: '新空间图层', bold: true, state: true }], true),
        tabs: [['globe', '空间图形', true], ['layout', '布局']],
    },
    {
        title: '柱状图',
        share: 290,
        tree: database([{ icon: 'report', text: 'A3工勘柱状图', bold: true, state: true, fold: 'closed', color: '#0a0', dot: true }], true),
        tabs: [['bars', '柱状图', true], ['section', '剖面图']],
    },
    {
        title: '属性',
        share: 267,
        tree: database([
            { icon: 'folderOpen', text: '工程数据', fold: 'open', children: [{ icon: 'form', text: '工程概况', mesh: true }] },
            folder('钻探数据', true),
            folder('其他数据'),
        ]),
        tabs: [['sheet', '属性表', true], ['query', '查询表'], ['book', '报告']],
    },
];

/* ---------- drawing area ---------- */

const Document = styled.section`
    position: relative;
    display: flex;
    flex-direction: column;
    flex: 1;
    min-width: 0;
    margin-bottom: 4px;
    border-bottom: 2px solid #fff;
    border-right: 1px solid #fff;
    background: #fff;
`;

const TopRuler = styled.div`
    position: relative;
    height: 17px;
    background: linear-gradient(#6f6f6f, #a8a8a8 25%, #fff 65%, #fff 75%, #b0b0b0);
    font: 13px/14px "Liberation Serif", serif;
`;

const RulerText = styled.span`
    position: absolute;
    top: 1px;
    left: ${(p) => p.$x}px;
`;

const RulerEdge = styled.svg`
    position: absolute;
    top: 0;
    ${(p) => (p.$right ? 'right: 0;' : 'left: 0;')}
`;

const RulerTick = styled.span`
    position: absolute;
    left: ${(p) => p.$x}px;
    top: 0;
    width: 1px;
    height: 17px;
    background: #000;
`;

const DrawRow = styled.div`
    display: flex;
    flex: 1;
`;

const SideRuler = styled.div`
    position: relative;
    width: 16px;
    background: linear-gradient(90deg, #6f6f6f, #a8a8a8 20%, #fff 60%, #fff 75%, #b0b0b0);
    font: 13px/14px "Liberation Serif", serif;
`;

const SideText = styled.span`
    position: absolute;
    left: 1px;
    ${(p) => (p.$bottom ? `bottom: ${p.$bottom}px;` : `top: ${p.$y}px;`)}
    writing-mode: vertical-rl;
    transform: rotate(180deg);
`;

const SideTick = styled.span`
    position: absolute;
    left: 0;
    top: 600px;
    width: 16px;
    height: 1px;
    background: #000;
`;

const SideEdge = styled.svg`
    position: absolute;
    left: 0;
    ${(p) => (p.$bottom ? 'bottom: 0;' : 'top: 0;')}
`;

const Canvas = styled.div`
    flex: 1;
    background:
        linear-gradient(#aaa, #aaa) 75px 0 / 1px 100% no-repeat,
        linear-gradient(#aaa, #aaa) 744px 0 / 1px 100% no-repeat,
        linear-gradient(#aaa, #aaa) 0 600px / 100% 1px no-repeat,
        #fff;
`;

const DocTabs = styled.div`
    display: flex;
    height: 22px;
    padding-left: 6px;
    border-top: 1px solid #545454;
    background: #9c9f9d;
`;

const DocTab = styled.div`
    display: flex;
    align-items: center;
    gap: 4px;
    height: 20px;
    padding: 0 5px 0 6px;
    ${(p) => p.$active && 'margin-top: -1px; height: 21px; background: #fff; color: #00f; border: 1px solid #545454; border-top: 0; border-left: 0;'}
    button {
        width: 18px;
        height: 16px;
    }
`;

const DocNav = styled.div`
    display: flex;
    align-items: center;
    gap: 4px;
    margin-left: auto;
    padding-right: 5px;
`;

const TabClose = ({ label }) => (
    <button aria-label={label}><svg width="9" height="9" viewBox="0 0 9 9"><path d="M1 1l7 7M8 1L1 8" stroke="#000" strokeWidth="1.6" /></svg></button>
);

/* ---------- dialog ---------- */

const Overlay = styled.div`
    position: absolute;
    inset: 0 0 4px;
    display: flex;
    align-items: center;
    justify-content: center;
`;

const Dialog = styled.form`
    width: 457px;
    padding: 0 6px 6px;
    border: 1px solid #2b2422;
    border-radius: 6px;
    background:
        linear-gradient(90deg, rgba(255, 250, 242, 0.7), transparent 35%, transparent 60%, rgba(255, 246, 235, 0.7)) 0 0 / 100% 130px no-repeat,
        #e8c9ae;
    box-shadow: inset 0 0 0 1px #fbeee2, 2px 4px 10px 3px rgba(0, 0, 0, 0.6);
`;

const DialogHead = styled.div`
    display: flex;
    justify-content: space-between;
    height: 28px;
    h1 {
        margin: 5px 0 0 1px;
        font-size: 12px;
        font-weight: normal;
    }
`;

const CloseButton = styled.button`
    display: flex;
    align-items: center;
    justify-content: center;
    width: 47px;
    height: 19px;
    border: 1px solid #6b2a20;
    border-top: 0;
    border-radius: 0 0 4px 4px;
    background: linear-gradient(#e6a698, #d27a69 45%, #bb3520 50%, #d9694a);
    box-shadow: inset 0 0 0 1px #eab3a6;
`;

const DialogBody = styled.div`
    padding: 10px 11px;
    border: 1px solid #6b5a50;
    background: #f0f0f0;
`;

const Group = styled.fieldset`
    min-width: 0;
    margin: 0 0 12px;
    padding: 0;
    border: 1px solid #d5dfe5;
    border-radius: 2px;
    legend {
        height: 16px;
        margin-left: 4px;
        padding: 0 3px;
    }
`;

const GroupContent = styled.div`
    padding: ${(p) => p.$pad};
`;

const Field = styled.div`
    display: flex;
    align-items: center;
    gap: 5px;
    margin-top: ${(p) => p.$top || 0}px;
    label {
        min-width: ${(p) => p.$label || 0}px;
    }
`;

const FieldPair = styled.div`
    display: flex;
    gap: 23px;
`;

const TextInput = styled.input`
    width: ${(p) => p.$width || 94}px;
    height: 20px;
    padding: 0 3px;
    border: 1px solid #e3e6ea;
    border-top-color: #abadb3;
    background: #fff;
    outline: 0;
`;

const NumberEdit = styled.label`
    display: flex;
    align-items: center;
    width: 94px;
    height: 20px;
    padding-left: 3px;
    border: 1px solid #b5cfe7;
    border-top-color: #3d7bad;
    background: #fff;
    font: 10px/16px "Open Sans", sans-serif;
    input {
        field-sizing: content;
        border: 0;
        padding: 0;
        outline: 0;
        border-right: 1px solid #000;
    }
`;

const Radio = styled.input`
    appearance: none;
    flex: none;
    width: 12px;
    height: 12px;
    border: 1px solid #8e8f8f;
    border-radius: 50%;
    background: radial-gradient(#d5d5d5, #f8f8f8);
    &:checked {
        background: radial-gradient(#3bb7e6 10%, #12405f 42%, #f4f4f4 52%);
    }
`;

const RadioLabel = styled.label`
    display: flex;
    align-items: center;
    gap: 4px;
    margin-left: ${(p) => p.$gap || 0}px;
`;

const MemoBox = styled.div`
    display: flex;
    height: 96px;
    border: 1px solid #e3e6ea;
    border-top-color: #abadb3;
    background: #fff;
    textarea {
        flex: 1;
        border: 0;
        resize: none;
        outline: 0;
        background: none;
        overflow: hidden;
    }
`;

const ScrollTrack = styled.div`
    display: flex;
    flex-direction: column;
    justify-content: space-between;
    width: 17px;
    margin-top: 1px;
    background: #f0f0f0;
    button {
        height: 17px;
    }
`;

const DialogButtons = styled.div`
    display: flex;
    gap: 59px;
    padding: 2px 0 0 113px;
`;

const PushButton = styled.button`
    width: 73px;
    height: 21px;
    border: 1px solid ${(p) => (p.$primary ? '#3c7fb1' : '#707070')};
    border-radius: 3px;
    background: ${(p) => (p.$primary ? 'linear-gradient(#e8f5fc, #d8effb 48%, #bee6fd 52%, #a9dbf6)' : 'linear-gradient(#f2f2f2, #ebebeb 48%, #ddd 52%, #cfcfcf)')};
    box-shadow: inset 0 0 0 1px ${(p) => (p.$primary ? '#c9eefb' : '#fcfcfc')};
`;

const NewLayerDialog = () => (
    <Dialog role="dialog" aria-labelledby="dialog-title">
        <DialogHead>
            <h1 id="dialog-title">新建图层</h1>
            <CloseButton type="button" aria-label="关闭">
                <svg width="12" height="10" viewBox="0 0 12 10">
                    <path d="M2 1l8 8M10 1L2 9" stroke="#5a4a52" strokeWidth="4" />
                    <path d="M2 1l8 8M10 1L2 9" stroke="#fff" strokeWidth="2.4" />
                </svg>
            </CloseButton>
        </DialogHead>
        <DialogBody>
            <Group>
                <legend>图层要素</legend>
                <GroupContent $pad="5px 8px 9px 16px">
                    <Field $label={71}>
                        <label htmlFor="layer-name">图层名称</label>
                        <TextInput id="layer-name" $width={318} defaultValue="光栅图" />
                    </Field>
                    <Field $label={71} $top={12}>
                        <label htmlFor="layer-scale">图层比例尺</label>
                        <NumberEdit><input id="layer-scale" defaultValue="10000" size="5" /></NumberEdit>
                        <span>注：为分母值，确定各种图例空间尺度</span>
                    </Field>
                </GroupContent>
            </Group>
            <Group>
                <legend>屏幕显示范围</legend>
                <GroupContent $pad="7px 8px 16px 16px">
                    <FieldPair>
                        <Field $label={84}>
                            <label htmlFor="min-scale">最小显示比例尺</label>
                            <TextInput id="min-scale" />
                        </Field>
                        <Field $label={84}>
                            <label htmlFor="max-scale">最大显示比例尺</label>
                            <TextInput id="max-scale" />
                        </Field>
                    </FieldPair>
                </GroupContent>
            </Group>
            <Group>
                <legend>图层类型</legend>
                <GroupContent $pad="6px 8px 10px 90px">
                    <Field>
                        <RadioLabel><Radio type="radio" name="kind" defaultChecked />地理图层</RadioLabel>
                        <RadioLabel $gap={85}><Radio type="radio" name="kind" />平面图层</RadioLabel>
                    </Field>
                </GroupContent>
            </Group>
            <Group>
                <legend>图层说明</legend>
                <GroupContent $pad="3px 10px 7px">
                    <MemoBox>
                        <textarea aria-label="图层说明" />
                        <ScrollTrack>
                            <button type="button" aria-label="向上"><svg width="8" height="5" viewBox="0 0 8 5"><path d="M0 5l4-4 4 4z" fill="#888" /></svg></button>
                            <button type="button" aria-label="向下"><svg width="8" height="5" viewBox="0 0 8 5"><path d="M0 0l4 4 4-4z" fill="#888" /></svg></button>
                        </ScrollTrack>
                    </MemoBox>
                </GroupContent>
            </Group>
            <DialogButtons>
                <PushButton type="button" $primary>确定</PushButton>
                <PushButton type="button">取消</PushButton>
            </DialogButtons>
        </DialogBody>
    </Dialog>
);

/* ---------- status bar ---------- */

const StatusBar = styled.footer`
    display: flex;
    align-items: center;
    height: 25px;
    margin-left: -21px;
    background: #9c9f9d;
    a {
        color: #00f;
        text-decoration: none;
    }
    strong {
        font-size: 13px;
        margin-right: 5px;
    }
`;

const StatusLine = styled.span`
    width: 2px;
    height: 14px;
    margin: 0 9px 0 10px;
    background: #222;
`;

const StatusCheck = styled.label`
    display: flex;
    align-items: center;
    gap: 4px;
    margin-left: 5px;
    input {
        appearance: none;
        width: 12px;
        height: 12px;
        border: 1px solid #f4f4f4;
        background: linear-gradient(135deg, #c8cacc, #f2f2f2);
    }
`;

const StatusField = styled.label`
    display: flex;
    align-items: center;
    gap: 3px;
    margin-left: ${(p) => p.$left}px;
    input {
        width: ${(p) => p.$width}px;
        height: 18px;
        padding: 0 1px;
        border: 1px solid #7ea6d8;
        background: #fff;
        font: 11px/16px "Open Sans", sans-serif;
    }
`;

const App = () => (
    <Page>
        <GlobalStyle />
        <TitleStrip />
        <MenuBar>
            {menus.map((menu) => <button key={menu}>{menu}</button>)}
        </MenuBar>
        <ToolbarRow $height={25}>
            {topBars.map((items) => <ToolbarWithEnd key={items} items={items} />)}
            <Toolbar>
                <Grip />
                <SelectBox $width={187} $gap={4}>
                    <select disabled aria-label="字体"><option>宋体-方正超大字符集</option></select>
                </SelectBox>
                <Divider />
                <SelectBox $width={35} $gap={4}>
                    <select disabled aria-label="字号"><option>12</option></select>
                </SelectBox>
                <Tools items={formatBar} />
            </Toolbar>
        </ToolbarRow>
        <ToolbarRow $height={26}>
            {lowerBars.map((items) => <ToolbarWithEnd key={items} items={items} />)}
        </ToolbarRow>
        <Workspace>
            <Dock $side="left">
                {leftPanels.map((panel) => <DockPanel key={panel.title} controls {...panel} />)}
            </Dock>
            <Document>
                <TopRuler>
                    <RulerEdge width="62" height="17" viewBox="0 0 62 17">
                        <path d="M16 17h33c6-1 6-13 13-17H16z" fill="rgba(225,225,225,.7)" />
                        <path d="M16 16.5h32c6-1 6-13 13-16.5" fill="none" stroke="#555" strokeWidth="1.5" />
                    </RulerEdge>
                    <RulerText $x={1}>km</RulerText>
                    <RulerText $x={25}>406</RulerText>
                    <RulerText $x={78}>17 950</RulerText>
                    <RulerTick $x={91} />
                    <RulerText $x={747}>18 000</RulerText>
                    <RulerTick $x={760} />
                    <RulerEdge $right width="52" height="17" viewBox="0 0 52 17">
                        <path d="M1 0c9 5 7 15 15 16h36V0z" fill="rgba(225,225,225,.7)" />
                        <path d="M1 0c9 5 7 15 15 16h35V0" fill="none" stroke="#555" strokeWidth="1.5" />
                        <text x="21" y="12" fontSize="13">406</text>
                    </RulerEdge>
                </TopRuler>
                <DrawRow>
                    <SideRuler>
                        <SideEdge width="16" height="46" viewBox="0 0 16 46">
                            <path d="M15.5 0v34c-1 6-11 4-15 12" fill="none" stroke="#555" strokeWidth="1.5" />
                        </SideEdge>
                        <SideText $y={12}>28</SideText>
                        <SideText $y={580}>68 100</SideText>
                        <SideTick />
                        <SideText $bottom={13}>28</SideText>
                        <SideEdge $bottom width="16" height="50" viewBox="0 0 16 50">
                            <path d="M.5 0c4 9 14 7 15 14v36" fill="none" stroke="#555" strokeWidth="1.5" />
                        </SideEdge>
                    </SideRuler>
                    <Canvas />
                </DrawRow>
                <DocTabs>
                    <DocTab><Icon name="home" />YTLWorld起始页<TabClose label="关闭起始页" /></DocTab>
                    <DocTab $active><Icon name="globe" />空间图形编辑<TabClose label="关闭空间图形编辑" /></DocTab>
                    <DocNav>
                        {['M1 0v9M7 0v9L2 4.5z', 'M6 0v9L1 4.5z', 'M1 0v9l5-4.5z', 'M1 0v9l5-4.5zM7 0v9'].map((d) => (
                            <svg key={d} width="8" height="9" viewBox="0 0 8 9"><path d={d} fill="#7d807e" stroke="#7d807e" /></svg>
                        ))}
                    </DocNav>
                </DocTabs>
                <Overlay><NewLayerDialog /></Overlay>
            </Document>
            <Dock $side="right">
                {rightPanels.map((panel) => <DockPanel key={panel.title} {...panel} />)}
            </Dock>
        </Workspace>
        <StatusBar>
            <strong>选择图元：</strong>
            <span>鼠标操作&gt;&gt;</span>
            <RadioLabel $gap={7}><Radio type="radio" name="mode" defaultChecked />增加选择</RadioLabel>
            <RadioLabel $gap={13}><Radio type="radio" name="mode" />剔除选择</RadioLabel>
            <StatusLine />
            <a href="#filter">条件选择</a>
            <StatusLine />
            <a href="#props">属性显示</a>
            <StatusLine />
            <StatusCheck><input type="checkbox" />可选择只读图元</StatusCheck>
            <StatusLine />
            <span>图形窗口中心(km)&gt;&gt;</span>
            <StatusField $left={9} $width={79}>水平<input defaultValue="40457.000" /></StatusField>
            <StatusField $left={7} $width={74}>垂直<input defaultValue="2946.000" /></StatusField>
            <StatusLine />
            <StatusField $left={0} $width={64}>显示比例尺<input defaultValue="10000.000" /></StatusField>
        </StatusBar>
    </Page>
);

export default App;
